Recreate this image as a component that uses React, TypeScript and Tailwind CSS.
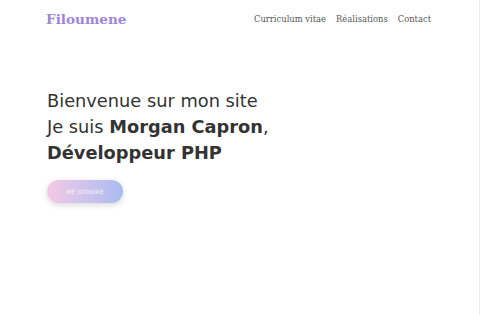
import React from 'react'

const NAV = ['Curriculum vitae', 'Réalisations', 'Contact']

export default function App() {
  return (
    <div className="min-h-[315px] w-full bg-white border-r border-[#ececec]">
      {/* Header */}
      <header className="flex items-center justify-between pl-[46px] pr-[48px] pt-[7px] h-[31px]">
        <a className="font-['DejaVu_Serif',serif] font-bold text-[13.6px] text-[#9d86d6]">
          Filoumene
        </a>
        <nav className="flex gap-[10px] font-['DejaVu_Serif',serif] text-[8.4px] text-[#555] pt-[1px]">
          {NAV.map(n => (
            <a key={n}>{n}</a>
          ))}
        </nav>
      </header>

      {/* Hero */}
      <section className="pl-[47px] pt-[57px]">
        <h1 className="font-['DejaVu_Sans',sans-serif] text-[17.8px] leading-[26px] text-[#333]">
          Bienvenue sur mon site
          <br />
          Je suis <strong className="font-bold">Morgan Capron</strong>,
          <br />
          <strong className="font-bold">Développeur PHP</strong>
        </h1>
        <button className="mt-[14px] w-[76px] h-[23px] rounded-full bg-gradient-to-r from-[#f3c9e4] to-[#a9bbf1] shadow-[0_2px_6px_rgba(0,0,0,0.15)] text-white/80 text-[6px] uppercase tracking-wide font-['DejaVu_Sans',sans-serif]">
          Me joindre
        </button>
      </section>
    </div>
  )
}
